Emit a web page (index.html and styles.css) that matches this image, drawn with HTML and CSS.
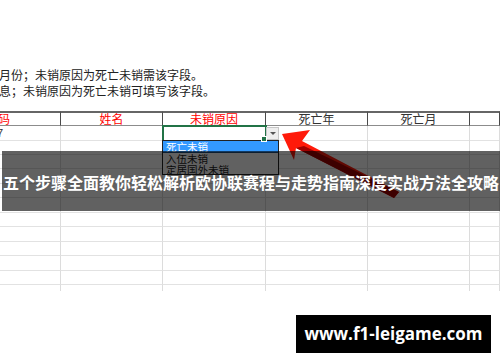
FILE: index.html
```html
<html lang="zh-CN">
<head>
  <meta charset="UTF-8">
  <title>欧协联赛程</title>
  <link rel="stylesheet" href="styles.css">
</head>
<body>
  <div class="sheet">
    <div class="notes">
      <p>月份；未销原因为死亡未销需该字段。</p>
      <p>息；未销原因为死亡未销可填写该字段。</p>
    </div>

    <div class="grid">
      <div class="cell head red left">码</div>
      <div class="cell head red">姓名</div>
      <div class="cell head red">未销原因</div>
      <div class="cell head">死亡年</div>
      <div class="cell head">死亡月</div>
      <div class="cell head"></div>

      <div class="cell first left num">7</div>
      <div class="cell first"></div>
      <div class="cell first active">
        <span class="drop-btn"></span>
        <ul class="drop-list">
          <li class="picked">死亡未销</li>
          <li>入伍未销</li>
          <li>定居国外未销</li>
        </ul>
      </div>
      <div class="cell first"></div>
      <div class="cell first"></div>
      <div class="cell first"></div>
    </div>
  </div>

  <svg class="arrow" width="500" height="362" viewBox="0 0 500 362">
    <polygon points="282,134 310,130 302,141 399,192 394,198 296,148 294,160" fill="#ff1a0a"/>
    <polygon points="296,148 394,198 399,192 304,146" fill="#a00000"/>
  </svg>

  <div class="banner">五个步骤全面教你轻松解析欧协联赛程与走势指南深度实战方法全攻略</div>

  <div class="site">www.f1-leigame.com</div>

  <script>
    // fill the empty body rows of the sheet
    const grid = document.querySelector('.grid');
    for (let r = 0; r < 11; r++) {
      for (let c = 0; c < 6; c++) {
        const cell = document.createElement('div');
        cell.classList.add('cell');
        grid.appendChild(cell);
      }
    }
  </script>
</body>
</html>
```

FILE: styles.css
```css
body {
  margin: 0;
  width: 500px;
  height: 362px;
  overflow: hidden;
  position: relative;
  background-color: #fff;
  font-family: "Noto Sans CJK SC", "Liberation Sans", sans-serif;
}

.notes {
  padding-top: 67px;
  margin-left: -1px;
  font-size: 12px;
  color: #222;
}

.notes p {
  margin: 0;
  height: 16px;
  line-height: 16px;
  white-space: nowrap;
}

.grid {
  margin-top: 12px;
  height: 180px;
  overflow: hidden;
  display: grid;
  grid-template-columns: 61px 102px 103px 102px 102px 30px;
  grid-auto-rows: 14.5px;
  font-size: 12px;
  color: #333;
}

.cell {
  box-sizing: border-box;
  border-right: 1px solid #dcdcdc;
  border-bottom: 1px solid #e2e2e2;
  text-align: center;
  line-height: 13px;
  white-space: nowrap;
}

.cell.head {
  height: 15px;
  border-top: 2px solid #666;
  border-right-color: #4a4a4a;
  border-bottom-color: #8c8c8c;
  line-height: 12px;
}

.cell.first {
  height: 15px;
  line-height: 14px;
}

.cell.left {
  text-align: left;
  text-indent: -2px;
}

.cell.num {
  font-family: "Liberation Sans", sans-serif;
  font-size: 11px;
  text-indent: -3px;
}

.red {
  color: #ff0000;
}

.active {
  position: relative;
  outline: 2px solid #217346;
  outline-offset: -1px;
  z-index: 2;
}

.active::after {
  content: "";
  position: absolute;
  right: -2px;
  bottom: -2px;
  width: 4px;
  height: 4px;
  background-color: #217346;
  border: 1px solid #fff;
}

.drop-btn {
  position: absolute;
  left: 103px;
  top: 1px;
  width: 13px;
  height: 13px;
  box-sizing: border-box;
  background-color: #eeeeee;
  border: 1px solid #c6c6c6;
}

.drop-btn::before {
  content: "";
  position: absolute;
  left: 3px;
  top: 4px;
  border-left: 3px solid transparent;
  border-right: 3px solid transparent;
  border-top: 3px solid #555;
}

.drop-list {
  position: absolute;
  left: -1px;
  top: 14px;
  width: 117px;
  height: 35px;
  box-sizing: border-box;
  margin: 0;
  padding: 0;
  list-style: none;
  background-color: #fff;
  border: 1px solid #222;
  text-align: left;
  font-size: 10.5px;
  color: #222;
}

.drop-list li {
  height: 11px;
  line-height: 11px;
  padding-left: 3px;
}

.drop-list li.picked {
  background-color: #3399ff;
  color: #fff;
  border-bottom: 1px solid #1c4d80;
}

.arrow {
  position: absolute;
  left: 0;
  top: 0;
  z-index: 3;
}

.banner {
  position: absolute;
  left: 2px;
  right: 0;
  top: 151px;
  height: 60px;
  box-sizing: border-box;
  padding-top: 3px;
  line-height: 57px;
  background-color: rgba(0, 0, 0, 0.62);
  color: #fff;
  font-size: 16px;
  font-weight: bold;
  text-align: center;
  white-space: nowrap;
  z-index: 4;
}

.site {
  position: absolute;
  left: 296px;
  top: 315px;
  width: 195px;
  height: 38px;
  line-height: 38px;
  background-color: #000;
  color: #fff;
  font-family: "Open Sans", "Liberation Sans", sans-serif;
  font-size: 17px;
  font-weight: bold;
  text-align: center;
  z-index: 4;
}
```
